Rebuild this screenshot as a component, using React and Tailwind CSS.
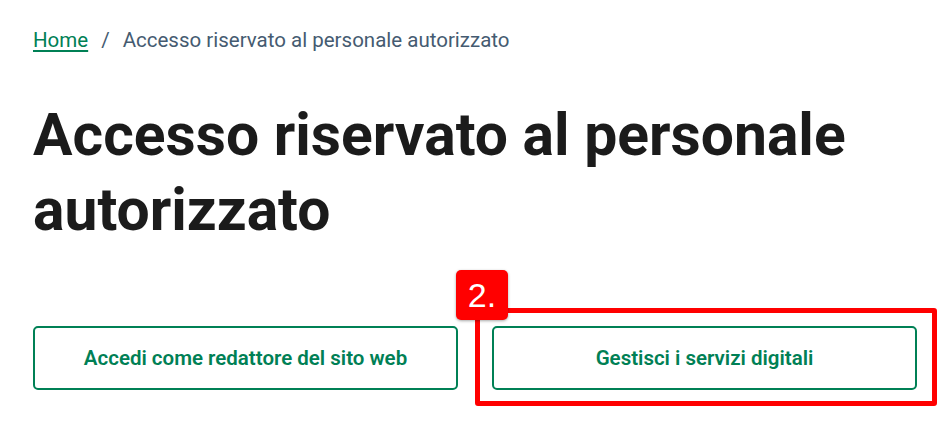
import React from "react";

const Breadcrumb = () => (
  <nav className="flex items-center text-[20.5px] leading-[28px]">
    <a href="#" className="text-[#008055] underline underline-offset-[3px] decoration-[1.5px]">
      Home
    </a>
    <span className="mx-[13px] text-[#455b71]">/</span>
    <span className="text-[#455b71]">Accesso riservato al personale autorizzato</span>
  </nav>
);

const OutlineButton = ({ children }) => (
  <button className="flex h-16 w-full items-center justify-center rounded-[5px] border-2 border-[#008055] bg-white text-[20.5px] font-semibold text-[#008055]">
    {children}
  </button>
);

export default function App() {
  return (
    <div className="min-h-[433px] bg-white pl-[33px] pt-[26px] font-['Roboto',sans-serif]">
      <Breadcrumb />
      <h1 className="mt-[43px] text-[58.8px] font-bold leading-[75px] text-[#1b1b1b]">
        Accesso riservato al personale
        <br />
        autorizzato
      </h1>

      <div className="mt-[79px] grid w-[884px] grid-cols-2 gap-[34px]">
        <OutlineButton>Accedi come redattore del sito web</OutlineButton>
        <div className="relative">
          <OutlineButton>Gestisci i servizi digitali</OutlineButton>
          {/* highlight annotation */}
          <div className="pointer-events-none absolute -top-[18px] -bottom-[16px] -left-[17px] -right-[20px] rounded-[3px] border-[5px] border-[#ff0000]" />
          <div className="absolute -left-[36px] -top-[56px] flex h-[50px] w-[52px] items-center justify-center rounded-[5px] bg-[#ff0000] font-['Liberation_Sans',sans-serif] text-[34px] leading-none text-white shadow-[0_1px_3px_rgba(0,0,0,0.35)]">
            2.
          </div>
        </div>
      </div>
    </div>
  );
}
